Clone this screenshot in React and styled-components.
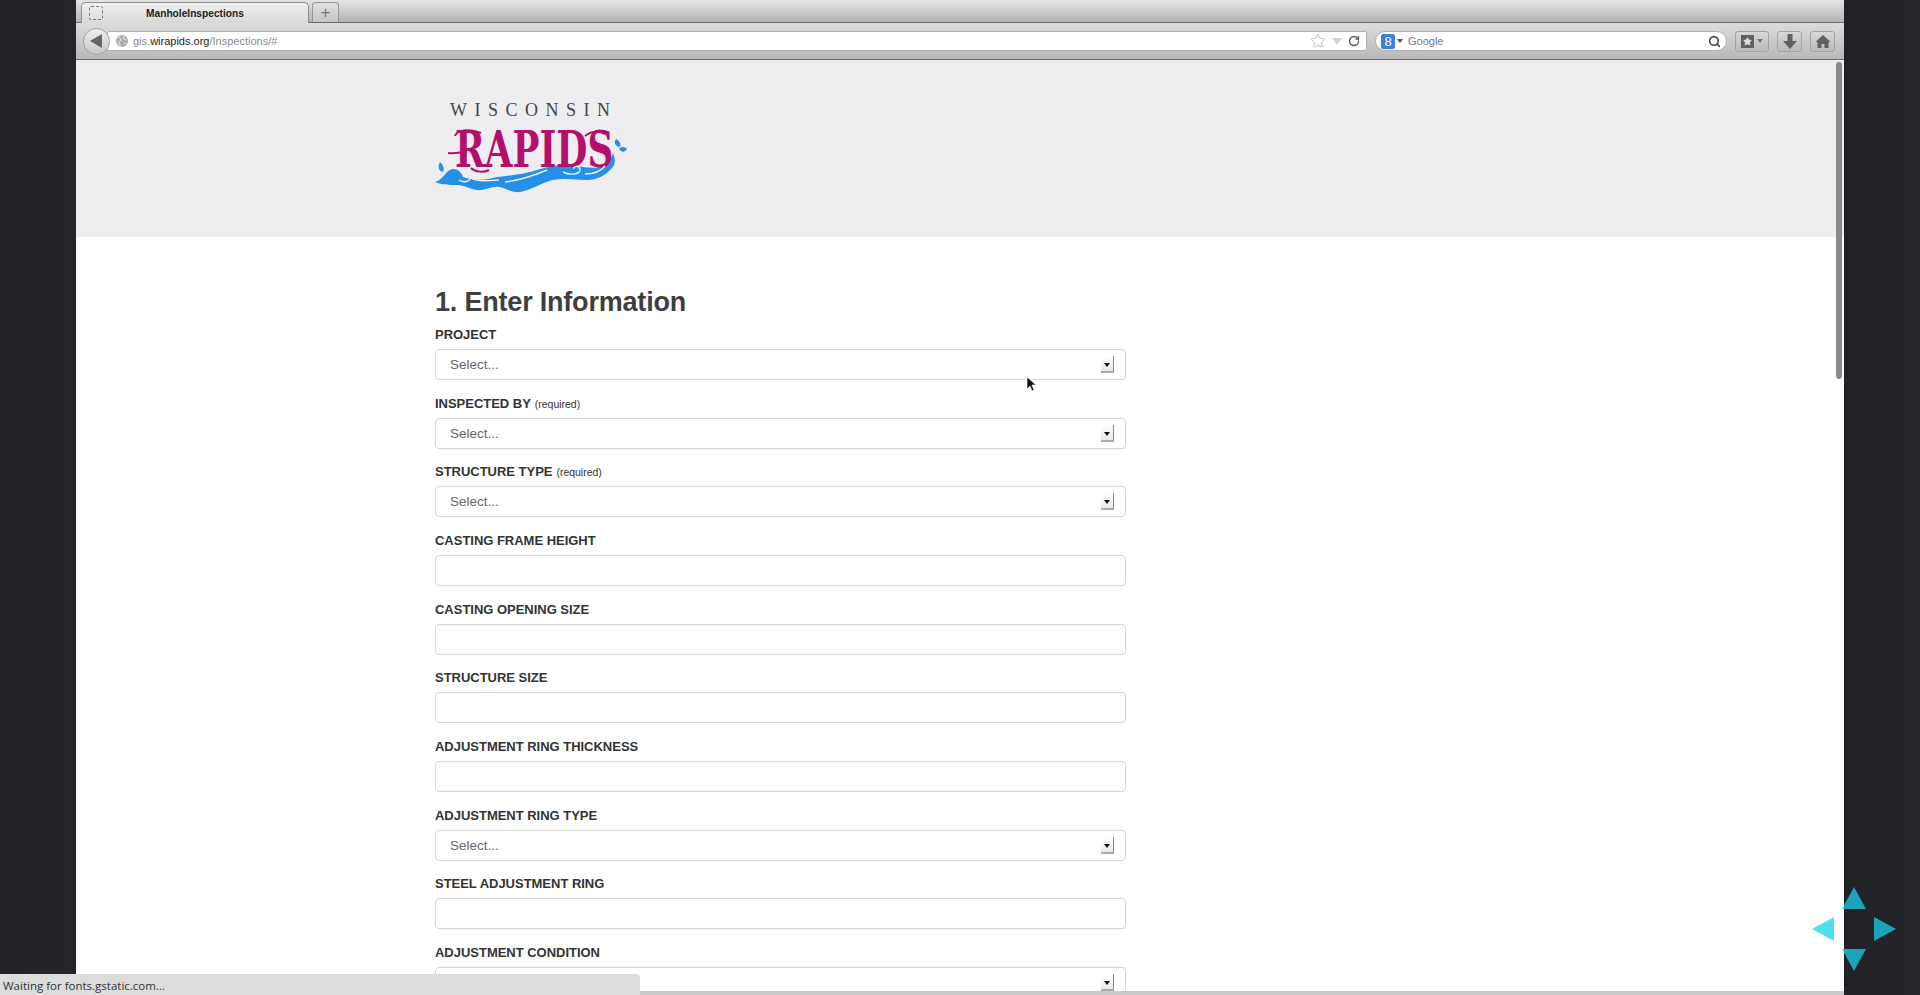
import React from 'react'
import styled, { createGlobalStyle } from 'styled-components'
import { RotateCw, Search, Star } from 'lucide-react'

const GlobalStyle = createGlobalStyle`
    html, body {
        margin: 0;
        padding: 0;
        height: 100%;
        overflow: hidden;
        background: #212327;
        font-family: "Liberation Sans", Arial, sans-serif;
    }
`

const fields = [
    { label: 'PROJECT', select: true },
    { label: 'INSPECTED BY', required: true, select: true },
    { label: 'STRUCTURE TYPE', required: true, select: true },
    { label: 'CASTING FRAME HEIGHT' },
    { label: 'CASTING OPENING SIZE' },
    { label: 'STRUCTURE SIZE' },
    { label: 'ADJUSTMENT RING THICKNESS' },
    { label: 'ADJUSTMENT RING TYPE', select: true },
    { label: 'STEEL ADJUSTMENT RING' },
    { label: 'ADJUSTMENT CONDITION', select: true, empty: true },
]

function Logo() {
    return (
        <LogoSvg viewBox="0 0 192 96" width="192" height="96">
            <text x="15" y="16" fontFamily="Liberation Serif, serif" fontSize="18" fill="#444" textLength="160" lengthAdjust="spacing">WISCONSIN</text>
            <path d="M0 82 C8 80 10 72 15 70 C20 67 26 71 28 77 C40 81 52 80 62 77 C78 75 88 74 95 72 C112 67 124 64 135 65 C148 67 158 69 165 67 C172 64 177 58 178 53 C181 60 180 65 177 68 C170 76 162 80 152 80 C140 80 130 78 118 80 C106 83 96 90 85 92 C78 93 72 89 65 87 C56 86 50 91 42 90 C34 89 30 85 22 85 C14 85 7 85 0 82 Z" fill="#2490e8" />
            <g transform="translate(20,67) scale(0.717,1)">
                <text fontFamily="DejaVu Serif, serif" fontWeight="700" fontSize="50" fill="#b2116b">RAPIDS</text>
            </g>
            <path d="M13 53 C20 54 26 52 32 52 M20 36 C22 30 34 28 46 33 M36 68 C40 72 48 73 54 70 M150 36 C158 30 166 32 170 34" fill="none" stroke="#b2116b" strokeWidth="2" />
            <path d="M24 80 C30 84 38 80 35 75 C32 71 27 74 29 77 M36 78 C44 83 56 80 64 80 M70 82 C86 80 98 76 112 70 M128 72 C136 76 146 74 145 69 C144 65 138 66 139 69 M150 74 C158 74 166 71 170 66" fill="none" stroke="#f0eff2" strokeWidth="1.4" />
            <path d="M5 62 C3 66 3 70 7 72 C10 70 9 66 5 62 Z M181 39 C178 43 181 47 185 47 C186 44 185 41 181 39 Z M192 49 C189 46 185 47 184 49 C187 53 190 52 192 49 Z" fill="#2490e8" />
        </LogoSvg>
    )
}

function Field({ field }) {
    return (
        <FieldRow>
            <FieldLabel>
                {field.label}
                {field.required && <Required>(required)</Required>}
            </FieldLabel>
            {field.select ? (
                <SelectBox>
                    {!field.empty && <span>Select...</span>}
                    <SelectArrow />
                </SelectBox>
            ) : (
                <TextInput type="text" />
            )}
        </FieldRow>
    )
}

export default function App() {
    return (
        <Screen>
            <GlobalStyle />
            <Side />
            <Browser>
                <TabBar>
                    <Tab>
                        <TabIcon />
                        <TabTitle>ManholeInspections</TabTitle>
                    </Tab>
                    <NewTab>+</NewTab>
                </TabBar>
                <Toolbar>
                    <BackButton>
                        <svg width="14" height="16" viewBox="0 0 14 16"><path d="M13 1 V15 L1 8 Z" fill="#666" /></svg>
                    </BackButton>
                    <UrlBar>
                        <Globe>
                            <svg width="12" height="12" viewBox="0 0 12 12"><circle cx="6" cy="6" r="6" fill="#aaa" /><path d="M2 2 C5 3 6 5 4 6 C2 7 3 10 5 11 M8 1 C7 4 9 5 11 5 M8 8 L10 9" fill="none" stroke="#e4e4e4" strokeWidth="1.2" /></svg>
                        </Globe>
                        <UrlText>gis.<b>wirapids.org</b>/Inspections/#</UrlText>
                        <UrlIcons>
                            <Star size={16} color="#b4b4b4" strokeWidth={1.3} />
                            <svg width="10" height="7" viewBox="0 0 10 7"><path d="M0 0 H10 L5 7 Z" fill="#d4d4d4" /></svg>
                            <RotateCw size={12} color="#555" strokeWidth={2.6} />
                        </UrlIcons>
                    </UrlBar>
                    <SearchBar>
                        <GoogleIcon>8</GoogleIcon>
                        <svg width="6" height="4" viewBox="0 0 6 4"><path d="M0 0 H6 L3 4 Z" fill="#555" /></svg>
                        <SearchText>Google</SearchText>
                        <Search size={13} color="#444" strokeWidth={3} />
                    </SearchBar>
                    <ToolGroup>
                        <ToolButton $wide>
                            <BookmarkIcon><Star size={9} color="#ddd" fill="#ddd" /></BookmarkIcon>
                            <svg width="6" height="4" viewBox="0 0 6 4"><path d="M0 0 H6 L3 4 Z" fill="#777" /></svg>
                        </ToolButton>
                        <ToolButton>
                            <svg width="14" height="15" viewBox="0 0 14 15"><path d="M4.5 0 H9.5 V7 H14 L7 15 L0 7 H4.5 Z" fill="#616161" /></svg>
                        </ToolButton>
                        <ToolButton>
                            <svg width="14" height="13" viewBox="0 0 14 13"><path d="M7 0 L14 6.5 L12.5 7.5 V13 H8.5 V9 H5.5 V13 H1.5 V7.5 L0 6.5 Z" fill="#616161" /></svg>
                        </ToolButton>
                    </ToolGroup>
                </Toolbar>
                <Page>
                    <PageHeader>
                        <Logo />
                    </PageHeader>
                    <Main>
                        <Heading>1. Enter Information</Heading>
                        {fields.map((f) => <Field key={f.label} field={f} />)}
                    </Main>
                </Page>
                <BottomEdge />
            </Browser>
            <Side />
            <Scrollbar />
            <Cursor viewBox="0 0 10 16" width="10" height="16">
                <path d="M1 1 V13 L4 10 L6 15 L8 14 L6 9 H10 Z" fill="#111" stroke="#fff" strokeWidth="0.6" />
            </Cursor>
            <StatusBar>Waiting for fonts.gstatic.com...</StatusBar>
            <NavArrows viewBox="0 0 84 84" width="84" height="84">
                <path d="M42 0 L54 22 H30 Z M0 42 L22 30 V54 Z M84 42 L62 30 V54 Z M42 84 L30 62 H54 Z" fill="#18d0eb" opacity="0.75" />
            </NavArrows>
        </Screen>
    )
}

const Screen = styled.div`
    display: flex;
    position: relative;
    width: 1920px;
    height: 995px;
    overflow: hidden;
    background: #212327;
`

const Side = styled.div`
    width: 76px;
    flex: none;
    background: linear-gradient(90deg, #1f2125, #24262b);
`

const Browser = styled.div`
    flex: 1;
    min-width: 0;
    display: flex;
    flex-direction: column;
    background: #fff;
`

const TabBar = styled.div`
    height: 23px;
    flex: none;
    box-sizing: border-box;
    display: flex;
    align-items: flex-end;
    gap: 3px;
    padding-left: 5px;
    background: linear-gradient(#e4e4e4, #b4b4b4);
    border-bottom: 1px solid #6c6c6c;
`

const Tab = styled.div`
    width: 228px;
    height: 21px;
    box-sizing: border-box;
    margin-bottom: -1px;
    display: flex;
    align-items: center;
    padding-left: 7px;
    border: 1px solid #8f8f8f;
    border-bottom: none;
    border-radius: 5px 5px 0 0;
    background: linear-gradient(#f1f1f1, #d8d8d8);
`

const TabIcon = styled.div`
    width: 12px;
    height: 12px;
    border: 1px dashed #777;
    border-radius: 2px;
`

const TabTitle = styled.div`
    margin-left: 43px;
    font-size: 10.2px;
    font-weight: 700;
    color: #222;
`

const NewTab = styled.div`
    width: 27px;
    height: 20px;
    box-sizing: border-box;
    display: flex;
    align-items: center;
    justify-content: center;
    border: 1px solid #979797;
    border-bottom: none;
    border-radius: 4px 4px 0 0;
    background: linear-gradient(#e0e0e0, #c6c6c6);
    font-size: 17px;
    color: #777;
`

const Toolbar = styled.div`
    height: 37px;
    flex: none;
    box-sizing: border-box;
    display: flex;
    align-items: center;
    padding: 0 7px 0 7px;
    background: linear-gradient(#dcdcdc, #b9b9b9);
    border-bottom: 1px solid #6e6e6e;
`

const BackButton = styled.div`
    width: 27px;
    height: 27px;
    flex: none;
    box-sizing: border-box;
    z-index: 1;
    display: flex;
    align-items: center;
    justify-content: center;
    padding-right: 2px;
    border: 1px solid #a0a0a0;
    border-radius: 50%;
    background: linear-gradient(#eee, #c8c8c8);
`

const UrlBar = styled.div`
    width: 1260px;
    height: 20px;
    flex: none;
    box-sizing: border-box;
    margin-left: -3px;
    display: flex;
    align-items: center;
    padding: 0 6px 0 8px;
    background: #fff;
    border: 1px solid #b0b0b0;
    border-radius: 2px;
`

const Globe = styled.div`
    width: 12px;
    height: 12px;
    line-height: 0;
`

const UrlText = styled.div`
    flex: 1;
    margin-left: 5px;
    font-size: 11px;
    color: #8a8a8a;
    b {
        font-weight: 400;
        color: #222;
    }
`

const UrlIcons = styled.div`
    display: flex;
    align-items: center;
    gap: 6px;
`

const SearchBar = styled.div`
    width: 352px;
    height: 20px;
    flex: none;
    box-sizing: border-box;
    margin-left: 8px;
    display: flex;
    align-items: center;
    gap: 2px;
    padding: 0 5px 0 5px;
    background: #fff;
    border: 1px solid #b0b0b0;
    border-radius: 10px;
`

const GoogleIcon = styled.div`
    width: 14px;
    height: 15px;
    display: flex;
    align-items: center;
    justify-content: center;
    background: #3f7fdc;
    border-radius: 2px;
    font-size: 13px;
    color: #fff;
`

const SearchText = styled.div`
    flex: 1;
    margin-left: 3px;
    font-size: 11px;
    color: #777;
`

const ToolGroup = styled.div`
    display: flex;
    gap: 8px;
    margin-left: 8px;
`

const ToolButton = styled.div`
    width: ${(props) => (props.$wide ? '34px' : '25px')};
    height: 21px;
    box-sizing: border-box;
    display: flex;
    align-items: center;
    justify-content: center;
    gap: 3px;
    border: 1px solid #a2a2a2;
    border-radius: 3px;
    background: linear-gradient(#d8d8d8, #bababa);
`

const BookmarkIcon = styled.div`
    width: 13px;
    height: 13px;
    display: flex;
    align-items: center;
    justify-content: center;
    background: #606060;
`

const Page = styled.div`
    flex: 1;
    min-height: 0;
    overflow: hidden;
    background: #fff;
`

const PageHeader = styled.div`
    height: 177px;
    box-sizing: border-box;
    padding: 40px 0 0 359px;
    background: #eeedf0;
`

const LogoSvg = styled.svg`
    display: block;
`

const Main = styled.div`
    width: 691px;
    padding: 47px 0 0 359px;
`

const Heading = styled.h1`
    margin: 0 0 5px;
    height: 36px;
    font-size: 27px;
    line-height: 36px;
    font-weight: 700;
    color: #3f3f41;
    letter-spacing: -0.2px;
`

const FieldRow = styled.div`
    height: 68.67px;
`

const FieldLabel = styled.div`
    height: 24px;
    padding-top: 1px;
    box-sizing: border-box;
    font-size: 13px;
    line-height: 18px;
    font-weight: 700;
    letter-spacing: -0.02px;
    color: #333;
`

const Required = styled.span`
    margin-left: 4px;
    font-size: 10.5px;
    font-weight: 400;
`

const SelectBox = styled.div`
    position: relative;
    height: 31px;
    box-sizing: border-box;
    display: flex;
    align-items: center;
    justify-content: space-between;
    padding: 0 12px 0 14px;
    border: 1px solid #d6d6d6;
    border-radius: 4px;
    background: #fff;
    font-size: 13.5px;
    color: #666;
`

const SelectArrow = styled.div`
    position: absolute;
    right: 11px;
    top: 6px;
    width: 13px;
    height: 17px;
    box-sizing: border-box;
    border-right: 1px solid #888;
    border-bottom: 2px solid #aaa;
    background: linear-gradient(#fff, #e8e8e8);
    &::after {
        content: '';
        position: absolute;
        left: 3px;
        top: 7px;
        border-left: 3px solid transparent;
        border-right: 3px solid transparent;
        border-top: 4px solid #111;
    }
`

const TextInput = styled.input`
    display: block;
    width: 100%;
    height: 31px;
    box-sizing: border-box;
    padding: 0 15px;
    border: 1px solid #d6d6d6;
    border-radius: 4px;
    background: #fff;
    outline: none;
`

const BottomEdge = styled.div`
    height: 4px;
    flex: none;
    background: #c9c9c9;
`

const Scrollbar = styled.div`
    position: absolute;
    left: 1836px;
    top: 62px;
    width: 6px;
    height: 317px;
    border-radius: 3px;
    background: #8a8a8a;
`

const Cursor = styled.svg`
    position: absolute;
    left: 1026px;
    top: 376px;
`

const StatusBar = styled.div`
    position: absolute;
    left: 0;
    bottom: 0;
    width: 640px;
    height: 21px;
    box-sizing: border-box;
    padding: 3px 0 0 3px;
    border-radius: 0 4px 0 0;
    background: #dcdcdc;
    font-family: "Open Sans", sans-serif;
    font-size: 11.5px;
    line-height: 17px;
    color: #333;
`

const NavArrows = styled.svg`
    position: absolute;
    left: 1812px;
    top: 887px;
`
